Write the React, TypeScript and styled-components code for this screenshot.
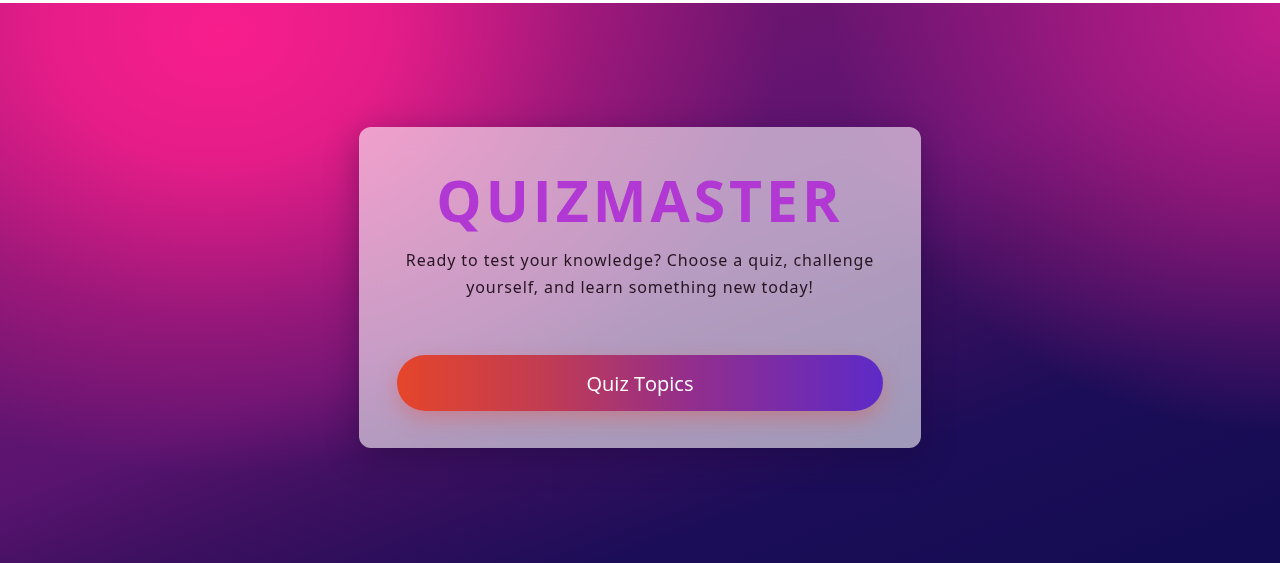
import React from "react";
import styled, { createGlobalStyle } from "styled-components";

const GlobalStyle = createGlobalStyle`
  html, body {
    margin: 0;
    padding: 0;
    background: #ffffff;
  }
  body {
    padding-top: 3px;
    font-family: "Open Sans", "Noto Sans", sans-serif;
  }
`;

const Page = styled.main`
  height: 560px;
  display: flex;
  align-items: flex-start;
  justify-content: center;
  padding-top: 124px;
  box-sizing: border-box;
  background:
    radial-gradient(ellipse 560px 440px at 220px 30px, rgba(248, 30, 140, 1) 0%, rgba(248, 30, 140, 0.85) 30%, rgba(248, 30, 140, 0.35) 65%, rgba(248, 30, 140, 0) 100%),
    radial-gradient(ellipse 460px 420px at 1290px 10px, rgba(196, 28, 138, 1) 0%, rgba(196, 28, 138, 0.6) 45%, rgba(196, 28, 138, 0) 100%),
    linear-gradient(160deg, #8a1676 0%, #6c1570 26%, #5a1470 48%, #3e1060 59%, #1c0d58 76%, #120c52 100%);
`;

const Card = styled.section`
  width: 562px;
  box-sizing: border-box;
  padding: 40px 38px 37px;
  border-radius: 12px;
  background: rgba(255, 255, 255, 0.58);
  backdrop-filter: blur(12px);
  box-shadow: 0 8px 32px rgba(20, 5, 50, 0.35);
  display: flex;
  flex-direction: column;
  align-items: center;
  text-align: center;
`;

const Title = styled.h1`
  margin: 0;
  font-family: "Open Sans", "Noto Sans", sans-serif;
  font-weight: 700;
  font-size: 57px;
  line-height: 66px;
  letter-spacing: 4px;
  color: #b138d2;
`;

const Lead = styled.p`
  margin: 14px 0 0;
  font-family: "Noto Sans", "Open Sans", sans-serif;
  font-size: 16px;
  line-height: 27px;
  letter-spacing: 0.9px;
  color: #261422;
`;

const TopicsButton = styled.button`
  margin-top: 54px;
  width: 100%;
  height: 56px;
  border: none;
  border-radius: 28px;
  background: linear-gradient(90deg, #e5452a 0%, #c23c52 30%, #932e8c 60%, #5d2ac8 100%);
  box-shadow: 0 8px 20px rgba(229, 80, 60, 0.35);
  color: #ffffff;
  font-family: "Open Sans", "Noto Sans", sans-serif;
  font-size: 20px;
  cursor: pointer;
`;

export default function App() {
  return (
    <>
      <GlobalStyle />
      <Page>
        <Card>
          <Title>QUIZMASTER</Title>
          <Lead>
            Ready to test your knowledge? Choose a quiz, challenge
            <br />
            yourself, and learn something new today!
          </Lead>
          <TopicsButton>Quiz Topics</TopicsButton>
        </Card>
      </Page>
    </>
  );
}
